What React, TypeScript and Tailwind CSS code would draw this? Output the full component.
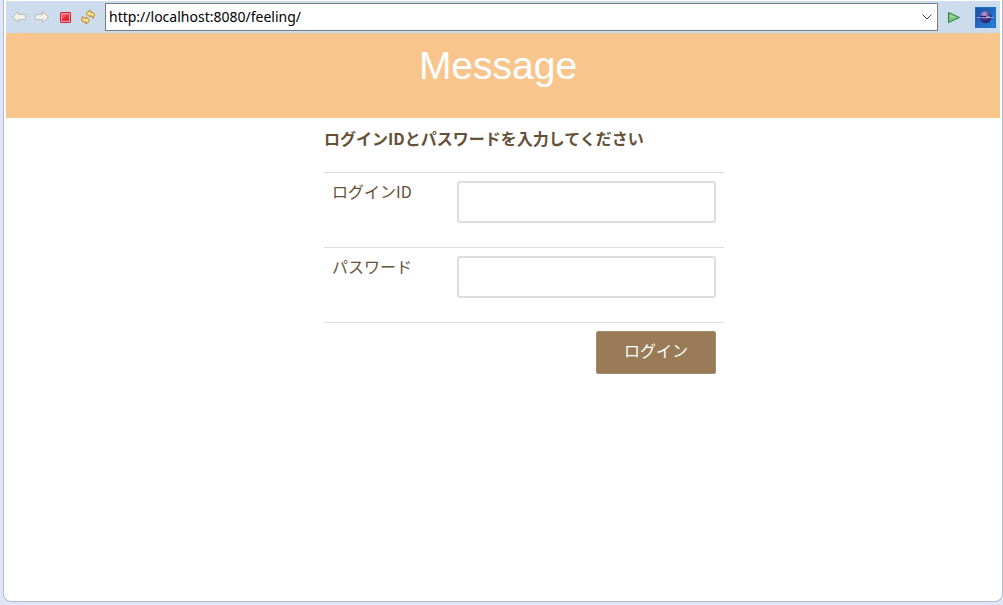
import type { ReactNode } from "react";

function ToolButton({ label, children }: { label: string; children: ReactNode }) {
  return (
    <button type="button" aria-label={label} className="flex size-4 shrink-0 items-center justify-center">
      {children}
    </button>
  );
}

function ArrowIcon({ flipped = false }: { flipped?: boolean }) {
  return (
    <svg width="16" height="16" viewBox="0 0 16 16" className={flipped ? "-scale-x-100" : ""}>
      <path
        d="M1.500 8 7.500 2.500V5.500H14.500V10.500H7.500V13.500Z"
        fill="#f3f1ec"
        stroke="#bdbab4"
        strokeWidth="1"
        strokeLinejoin="round"
      />
    </svg>
  );
}

function StopIcon() {
  return (
    <svg width="16" height="16" viewBox="0 0 16 16">
      <rect x="3.500" y="3.500" width="10" height="10" rx="0.500" fill="#f5a5a8" stroke="#c4202c" />
      <rect x="5" y="5" width="7" height="7" fill="#e22a36" />
      <path d="M5 5h7L5 10Z" fill="#ea5a62" />
    </svg>
  );
}

function RefreshIcon() {
  return (
    <svg width="16" height="16" viewBox="0 0 16 16" fill="#fbe391" stroke="#b98218" strokeLinejoin="round">
      <path d="M6 4.500 10 1V3Q14 3 14.500 5.500L13 9.500Q12.500 6.500 10 6.500V8Z" />
      <path d="M10 11.500 6 15V13Q2 13.500 1.500 11L2.500 7.500Q4 9.500 6 9.500V8Z" />
    </svg>
  );
}

function RunIcon() {
  return (
    <svg width="16" height="16" viewBox="0 0 16 16">
      <path d="M2.500 3.500 13.500 8.500 2.500 13.500Z" fill="#7cc57f" stroke="#258142" strokeLinejoin="round" />
      <path d="M4 5.500 10 8.500H4Z" fill="#a5d6a0" />
    </svg>
  );
}

function GlobeIcon() {
  return (
    <svg width="21" height="21" viewBox="0 0 21 21">
      <defs>
        <linearGradient id="sky" x1="0" y1="0" x2="1" y2="1">
          <stop offset="0" stopColor="#1753a8" />
          <stop offset="0.500" stopColor="#2268c0" />
          <stop offset="1" stopColor="#2b80d8" />
        </linearGradient>
        <radialGradient id="planet" cx="0.400" cy="0.250" r="0.750">
          <stop offset="0" stopColor="#b8a8dc" />
          <stop offset="0.500" stopColor="#5c4596" />
          <stop offset="1" stopColor="#1d1859" />
        </radialGradient>
      </defs>
      <rect x="0.500" y="0.500" width="20" height="20" fill="url(#sky)" stroke="#1b72c7" />
      <circle cx="10.500" cy="10" r="6" fill="url(#planet)" />
      <path d="M5 9h11v1H5Z" fill="#272068" />
      <path d="M2 10.500h17" stroke="#8f8fd8" strokeWidth="1" />
      <path d="M11 10h4" stroke="#e5d8f8" strokeWidth="1" />
    </svg>
  );
}

function Toolbar() {
  return (
    <div className="flex h-8 items-center bg-[#cddced] pr-1 pl-[5px]">
      <div className="flex items-center gap-[7px]">
        <ToolButton label="Back">
          <ArrowIcon />
        </ToolButton>
        <ToolButton label="Forward">
          <ArrowIcon flipped />
        </ToolButton>
        <ToolButton label="Stop">
          <StopIcon />
        </ToolButton>
        <ToolButton label="Refresh">
          <RefreshIcon />
        </ToolButton>
      </div>
      <div className="ml-[9px] flex h-7 min-w-0 flex-1 items-center border border-[#7a7a7a] bg-white">
        <input
          type="text"
          aria-label="URL"
          defaultValue="http://localhost:8080/feeling/"
          className="h-full min-w-0 flex-1 bg-transparent px-[3px] pb-0.5 font-['Noto_Sans',sans-serif] text-sm text-black outline-none"
        />
        <button type="button" aria-label="Show history" className="flex w-5 items-center justify-center">
          <svg width="10" height="6" viewBox="0 0 10 6" fill="none" stroke="#444444">
            <path d="M0.500 0.500 5 5 9.500 0.500" />
          </svg>
        </button>
      </div>
      <div className="flex items-center gap-[13px] pl-2">
        <ToolButton label="Go">
          <RunIcon />
        </ToolButton>
        <button type="button" aria-label="Open browser">
          <GlobeIcon />
        </button>
      </div>
    </div>
  );
}

function Field({ id, label, type }: { id: string; label: string; type: string }) {
  return (
    <div className="flex h-[75px] items-start border-t border-[#dddddd] p-2">
      <label htmlFor={id} className="w-[125px] shrink-0 leading-5">
        {label}
      </label>
      <input
        id={id}
        type={type}
        className="h-[42px] min-w-0 flex-1 rounded-[3px] border-2 border-[#dddddd] bg-white px-2 outline-none"
      />
    </div>
  );
}

export default function App() {
  return (
    <div className="flex min-h-screen flex-col bg-[#dfe6f7] pb-[3px] pl-[3px]">
      <div className="flex flex-1 flex-col rounded-b-lg border-x border-b border-[#b4b9d0] bg-white px-0.5 pt-px">
        <Toolbar />
        <header className="h-[85px] bg-[#f8c68c] pt-[9px] pr-2.5 text-center">
          <h1 className="font-['Liberation_Sans',sans-serif] text-[39px] leading-[48px] text-white">Message</h1>
        </header>
        <main className="ml-[32%] w-[400px] max-w-full pt-2 font-['Noto_Sans_CJK_JP',sans-serif] text-base text-[#665037]">
          <h2 className="mb-[22px] leading-6 font-bold">ログインIDとパスワードを入力してください</h2>
          <form onSubmit={(event) => event.preventDefault()}>
            <Field id="login-id" label="ログインID" type="text" />
            <Field id="password" label="パスワード" type="password" />
            <div className="flex justify-end border-t border-[#dddddd] p-2">
              <button
                type="submit"
                className="h-[43px] w-[120px] rounded-xs border border-[#a58a6a] bg-[#997b57] pb-1.5 text-white"
              >
                ログイン
              </button>
            </div>
          </form>
        </main>
      </div>
    </div>
  );
}
